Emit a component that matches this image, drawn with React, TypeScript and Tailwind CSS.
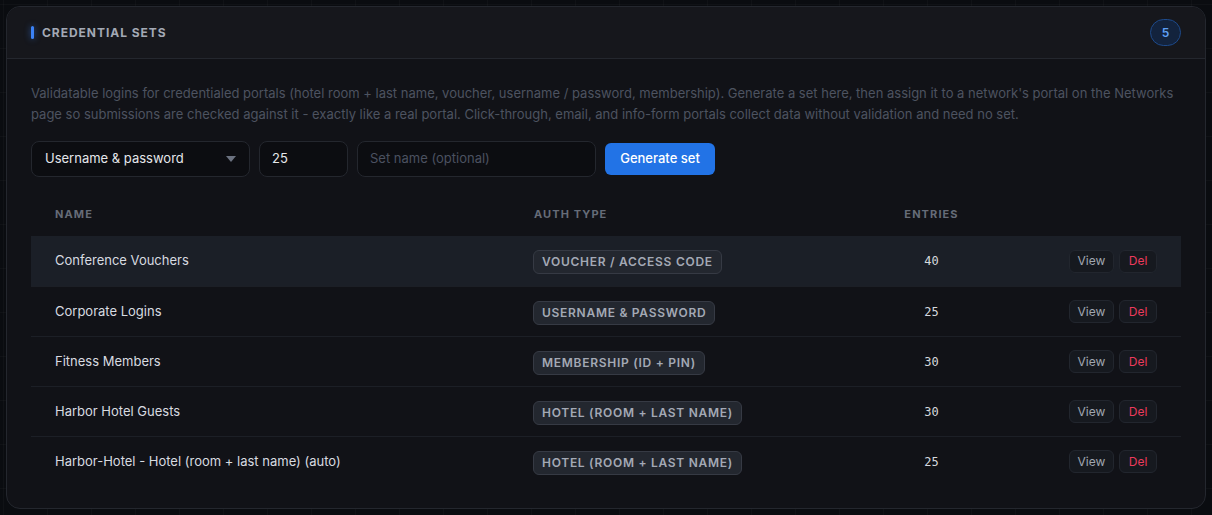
const sets = [
  { name: "Conference Vouchers", type: "Voucher / access code", entries: 40 },
  { name: "Corporate Logins", type: "Username & password", entries: 25 },
  { name: "Fitness Members", type: "Membership (ID + PIN)", entries: 30 },
  { name: "Harbor Hotel Guests", type: "Hotel (room + last name)", entries: 30 },
  { name: "Harbor-Hotel - Hotel (room + last name) (auto)", type: "Hotel (room + last name)", entries: 25 },
];

export default function App() {
  return (
    <div
      className="min-h-[515px] w-full p-[6px] bg-[#0a0c10] bg-[linear-gradient(rgba(255,255,255,0.025)_1px,transparent_1px),linear-gradient(90deg,rgba(255,255,255,0.025)_1px,transparent_1px)] bg-[size:44px_44px] bg-[position:3px_4px]"
      style={{ fontFamily: "Inter, 'Noto Sans', sans-serif" }}
    >
      <div className="h-[503px] rounded-[14px] border border-[#24272e] bg-[#111217] overflow-hidden">
        {/* Header */}
        <div className="h-[52px] flex items-center justify-between px-6 bg-[#16171c] border-b border-[#24272e]">
          <div className="flex items-center gap-2">
            <span className="w-[3px] h-[13px] rounded-sm bg-[#3b82f6] shadow-[0_0_6px_rgba(59,130,246,0.6)]" />
            <h2 className="text-[12px] font-bold tracking-[0.08em] text-[#a3a9b5] uppercase">Credential sets</h2>
          </div>
          <div className="w-[31px] h-[27px] rounded-full border border-[#1e4a8a] bg-[#13233d] flex items-center justify-center text-[12px] font-semibold text-[#5fa0f5]">
            5
          </div>
        </div>

        {/* Body */}
        <div className="px-6 pt-6">
          <p className="text-[13px] leading-[21px] text-[#4d5360]">
            Validatable logins for credentialed portals (hotel room + last name, voucher, username / password, membership). Generate a set here, then assign it to a network's portal on the Networks page so submissions are checked against it - exactly like a real portal. Click-through, email, and info-form portals collect data without validation and need no set.
          </p>

          <div className="mt-4 flex items-center gap-[9px]">
            <div className="w-[219px] h-9 rounded-lg border border-[#24272e] bg-[#0c0d11] flex items-center justify-between pl-[13px] pr-[13px]">
              <span className="text-[13px] text-[#e5e7eb]">Username &amp; password</span>
              <svg width="10" height="6" viewBox="0 0 10 6"><path d="M0 0h10L5 6z" fill="#6b7280" /></svg>
            </div>
            <div className="w-[89px] h-9 rounded-lg border border-[#24272e] bg-[#0c0d11] flex items-center px-[12px] text-[13px] text-[#e5e7eb]">
              25
            </div>
            <div className="w-[239px] h-9 rounded-lg border border-[#24272e] bg-[#0c0d11] flex items-center px-[12px] text-[13px] text-[#4b5160]">
              Set name (optional)
            </div>
            <button className="w-[110px] h-8 rounded-md bg-[#2273e6] text-[13px] font-medium text-white">
              Generate set
            </button>
          </div>

          {/* Table */}
          <div className="mt-[15px]">
            <div className="grid grid-cols-[479px_370px_103px_1fr] h-[44px] items-center text-[11px] font-bold tracking-[0.1em] uppercase text-[#666c78]">
              <div className="pl-6">Name</div>
              <div className="pl-6">Auth type</div>
              <div className="text-center">Entries</div>
              <div />
            </div>
            {sets.map((s, i) => (
              <div
                key={s.name}
                className={
                  "grid grid-cols-[479px_370px_103px_1fr] h-[50px] items-center " +
                  (i === 0 ? "bg-[#1b1f27]" : "border-t border-[#1c1f26]")
                }
              >
                <div className="pl-6 text-[13px] text-[#d8dbe0]">{s.name}</div>
                <div className="pl-[23px]">
                  <span className="inline-flex items-center h-6 px-2 rounded-md border border-[#363a44] bg-[#23272f] text-[12px] font-semibold tracking-[0.06em] uppercase text-[#a3a9b5]">
                    {s.type}
                  </span>
                </div>
                <div className="text-center text-[12px] text-[#d6d9de]" style={{ fontFamily: "'DejaVu Sans Mono', monospace" }}>
                  {s.entries}
                </div>
                <div className="flex justify-end gap-[5px] pr-6">
                  <button className="w-[45px] h-[23px] rounded-md border border-[#22262e] bg-[#16191f] text-[12px] text-[#a0a6b0]">View</button>
                  <button className="w-[38px] h-[23px] rounded-md border border-[#22262e] bg-[#16191f] text-[12px] text-[#ec3a5c]">Del</button>
                </div>
              </div>
            ))}
          </div>
        </div>
      </div>
    </div>
  );
}
